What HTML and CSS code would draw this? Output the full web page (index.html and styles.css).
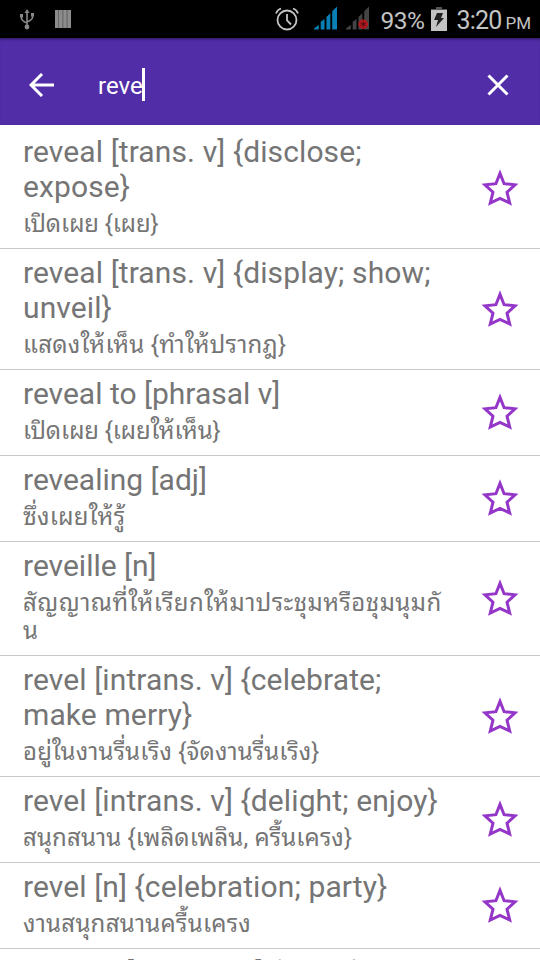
FILE: index.html
```html
<!DOCTYPE html>
<html lang="en">
<head>
<meta charset="utf-8">
<title>Dictionary</title>
<link rel="stylesheet" href="styles.css">
</head>
<body>
<svg width="0" height="0" class="defs"><symbol id="star" viewBox="0 0 38 38"><path d="M19 4.400L23.100 14.700L34 15.800L26 23.200L28.700 34L19 29.300L9.300 34L12 23.200L4 15.800L14.900 14.700Z"/></symbol></svg>
<header class="status">
<svg class="usb" width="14" height="21" viewBox="0 0 14 21"><path d="M7 3v14M1.500 7v2.500q0 2 5.500 4.500M12.500 6v2.500q0 2-5.500 4.500"/><path class="fill" d="M7 0l2.500 4h-5zM0 5h3v3.500H0zM11 4h3v3.500h-3z"/><circle class="fill" cx="7" cy="18" r="2.400"/></svg>
<svg class="bars" width="16" height="18" viewBox="0 0 16 18"><path class="back-fill" d="M0 0h16v18H0z"/><path d="M0 0h3.300v18H0zM4 0h3.500v18H4zM8.300 0h3.400v18H8.300zM12.500 0H16v18h-3.500z"/></svg>
<span class="spacer"></span>
<svg class="alarm" width="24" height="24" viewBox="0 0 24 24"><circle cx="12" cy="13" r="9.500"/><path d="M12 7v6.500l4 4M1 6.500q1.500-4 5-5M23 6.500q-1.500-4-5-5"/></svg>
<svg class="signal" width="23" height="24" viewBox="0 0 24 24"><path d="M0 24v-1l5-4v5zM7 24v-8l4-3v11zM13 24V11l4-4v17zM19 24V5l5-5v24z"/></svg>
<svg class="signal off" width="23" height="24" viewBox="0 0 24 24"><path d="M0 24v-1l5-4v5zM7 24v-8l4-3v11zM13 24V11l4-4v17zM19 24V5l5-5v24z"/><circle cx="18" cy="18.500" r="5"/><path class="mark" d="M18 15v7M15 17l6 3M15 20l6-3"/></svg>
<span class="battery">93%</span>
<svg class="cell" width="16" height="24" viewBox="0 0 16 24"><path class="cap" d="M5 0h6v2h5v2H0V2h5z"/><path d="M0 3h16v21H0z"/><path class="bolt" d="M6 6h6l-2 5h3L5 20l2-7H3z"/></svg>
<span class="time">3:20</span><span class="pm">PM</span>
</header>
<nav class="toolbar">
<svg class="back" width="26" height="24" viewBox="0 0 26 24"><path d="M13 1L2 12l11 11M2 12h23"/></svg>
<span class="query">reve</span><span class="caret"></span>
<span class="spacer"></span>
<svg class="close" width="22" height="22" viewBox="0 0 22 22"><path d="M1.500 1.500l19 19M20.500 1.500l-19 19"/></svg>
</nav>
<main class="list">
<article class="row"><div class="text"><h2>reveal [trans. v] {disclose;<br>expose}</h2><p class="tight">เปิดเผย {เผย}</p></div><svg class="star"><use href="#star"/></svg></article>
<article class="row"><div class="text"><h2>reveal [trans. v] {display; show;<br>unveil}</h2><p class="wide">แสดงให้เห็น {ทำให้ปรากฎ}</p></div><svg class="star"><use href="#star"/></svg></article>
<article class="row"><div class="text"><h2 class="plain">reveal to [phrasal v]</h2><p class="tight">เปิดเผย {เผยให้เห็น}</p></div><svg class="star"><use href="#star"/></svg></article>
<article class="row"><div class="text"><h2 class="plain">revealing [adj]</h2><p class="wide">ซึ่งเผยให้รู้</p></div><svg class="star"><use href="#star"/></svg></article>
<article class="row"><div class="text"><h2 class="plain">reveille [n]</h2><p class="widest">สัญญาณที่ให้เรียกให้มาประชุมหรือชุมนุมกั<br>น</p></div><svg class="star"><use href="#star"/></svg></article>
<article class="row"><div class="text"><h2>revel [intrans. v] {celebrate;<br>make merry}</h2><p>อยู่ในงานรื่นเริง {จัดงานรื่นเริง}</p></div><svg class="star"><use href="#star"/></svg></article>
<article class="row"><div class="text"><h2>revel [intrans. v] {delight; enjoy}</h2><p>สนุกสนาน {เพลิดเพลิน, ครื้นเครง}</p></div><svg class="star"><use href="#star"/></svg></article>
<article class="row"><div class="text"><h2>revel [n] {celebration; party}</h2><p class="wide">งานสนุกสนานครื้นเครง</p></div><svg class="star"><use href="#star"/></svg></article>
<article class="row"><div class="text"><h2>revel in [phrasal v] {enjoy}</h2></div></article>
</main>
</body>
</html>
```
FILE: styles.css
```css
body{margin:0;width:540px;height:960px;overflow:hidden;background:#fff;font-family:Roboto,"Noto Sans Thai Looped","Droid Sans Thai",Loma,"Noto Sans",sans-serif;color:#757575}
.defs{position:absolute}
.status{display:flex;box-sizing:border-box;height:38px;padding:0 9px 0 20px;background:#000;color:#c4c4c4;align-items:center;font-size:25px}
.spacer{flex:1}
.usb{margin-right:21px}
.usb path{fill:none;stroke:#888;stroke-width:1.6}
.usb .fill{fill:#888;stroke:none}
.bars{fill:#8c8c8c}
.bars .back-fill{fill:#555}
.alarm{fill:none;stroke:#c4c4c4;stroke-width:1.8;margin-right:15px}
.signal{fill:#087fb5;margin:-3px 9px 0 0}
.off{fill:#444;margin-right:11px}
.off circle{fill:#b8181e}
.off .mark{fill:none;stroke:#501014}
.battery{font-size:24.500px;letter-spacing:-.5px;margin-top:2px}
.time{letter-spacing:-.8px;margin-top:2px}
.cell{fill:#c4c4c4;margin:0 9px 0 7px}
.cell .cap{fill:#555}
.cell .bolt{fill:#222}
.pm{font-size:17px;margin:7px 0 0 4px}
.toolbar{display:flex;box-sizing:border-box;height:87px;padding:6px 31px 0 29px;align-items:center;background:#512da8;color:#fff;box-shadow:inset 0 3px 3px -2px #28165a}
.toolbar svg{fill:none;stroke:#fff;stroke-width:3}
.query{font-size:24px;margin:2px 0 0 43px}
.caret{width:3px;height:33px;background:#fff;margin-left:-1px}
.list{padding-top:3px}
.row{display:flex;box-sizing:border-box;padding:0 22px 0 23px;border-bottom:1px solid #c8c8c8;align-items:center;justify-content:space-between}
.text{width:425px;padding:6px 0 10px;white-space:nowrap}
h2{margin:0;font-size:30px;line-height:35px;font-weight:400;letter-spacing:.11px}
.plain{letter-spacing:0}
p{margin:6px 0 0;font-size:24px;line-height:28px;letter-spacing:.13px}
.tight{letter-spacing:-.15px}
.wide{letter-spacing:.26px}
.widest{letter-spacing:.47px}
.star{width:38px;height:38px;fill:none;stroke:#9436c8;stroke-width:3;margin:-1px -1px 0 0}
```
